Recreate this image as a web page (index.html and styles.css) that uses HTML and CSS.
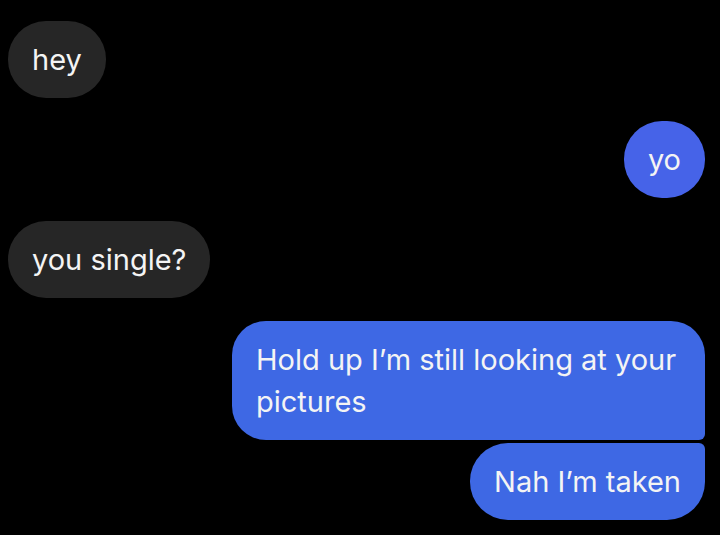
FILE: index.html
```html
<!DOCTYPE html>
<html lang="en">
<head>
    <meta charset="UTF-8">
    <meta name="viewport" content="width=device-width, initial-scale=1.0">
    <title>Chat</title>
    <link rel="stylesheet" href="styles.css">
</head>
<body>
    <div class="chat">
        <div class="bubble in">hey</div>
        <div class="bubble out single">yo</div>
        <div class="bubble in">you single?</div>

        <div class="group">
            <div class="bubble out first">Hold up I’m still looking at your pictures</div>
            <div class="bubble out last">Nah I’m taken</div>
        </div>
    </div>
</body>
</html>
```

FILE: styles.css
```css
* {
    margin: 0;
    padding: 0;
    box-sizing: border-box;
}

body {
    background-color: #000;
    font-family: Inter, Roboto, "Liberation Sans", sans-serif;
}

.chat {
    display: flex;
    flex-direction: column;
    gap: 23px;
    padding: 21px 15px 0 8px;
}

.group {
    display: flex;
    flex-direction: column;
    align-items: flex-end;
    gap: 3px;
}

.bubble {
    max-width: 473px;
    padding: 17.5px 24px;
    border-radius: 38px;
    font-size: 29px;
    line-height: 42px;
    color: #f4f4f4;
}

.in {
    align-self: flex-start;
    background-color: #262626;
}

.out {
    align-self: flex-end;
    background-color: #3e68e4;
}

.single {
    background-color: #4663e8;
}

.first {
    border-radius: 34px 34px 6px 34px;
}

.last {
    border-radius: 38px 6px 38px 38px;
}
```
